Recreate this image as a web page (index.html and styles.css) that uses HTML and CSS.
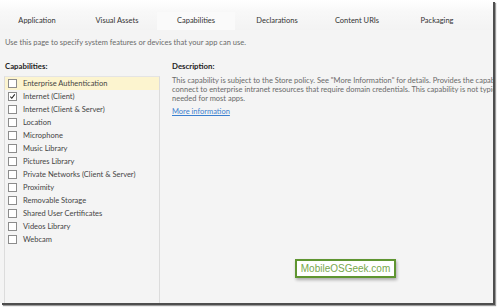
FILE: index.html
```html
<!DOCTYPE html>
<html>
<head>
<meta charset="utf-8">
<link rel="stylesheet" href="styles.css">
</head>
<body>
<div class="frame">
  <div class="tabs">
    <div class="tab">Application</div>
    <div class="tab">Visual Assets</div>
    <div class="tab selected">Capabilities</div>
    <div class="tab">Declarations</div>
    <div class="tab">Content URIs</div>
    <div class="tab">Packaging</div>
  </div>
  <div class="intro">Use this page to specify system features or devices that your app can use.</div>
  <div class="columns">
    <div class="left">
      <div class="heading">Capabilities:</div>
      <div class="list">
        <div class="item active"><span class="box"></span>Enterprise Authentication</div>
        <div class="item"><span class="box"><svg viewBox="0 0 8 8" width="8" height="8"><path d="M1.5 4.2 L3.2 6 L6.6 1.6" fill="none" stroke="#222" stroke-width="1.2"/></svg></span>Internet (Client)</div>
        <div class="item"><span class="box"></span>Internet (Client &amp; Server)</div>
        <div class="item"><span class="box"></span>Location</div>
        <div class="item"><span class="box"></span>Microphone</div>
        <div class="item"><span class="box"></span>Music Library</div>
        <div class="item"><span class="box"></span>Pictures Library</div>
        <div class="item"><span class="box"></span>Private Networks (Client &amp; Server)</div>
        <div class="item"><span class="box"></span>Proximity</div>
        <div class="item"><span class="box"></span>Removable Storage</div>
        <div class="item"><span class="box"></span>Shared User Certificates</div>
        <div class="item"><span class="box"></span>Videos Library</div>
        <div class="item"><span class="box"></span>Webcam</div>
      </div>
    </div>
    <div class="right">
      <div class="heading">Description:</div>
      <div class="desc">
        <div class="line">This capability is subject to the Store policy. See "More Information" for details. Provides the capability to</div>
        <div class="line">connect to enterprise intranet resources that require domain credentials. This capability is not typically</div>
        <div class="line">needed for most apps.</div>
        <a class="more" href="#">More information</a>
      </div>
    </div>
  </div>
  <div class="watermark">MobileOSGeek.com</div>
</div>
</body>
</html>
```

FILE: styles.css
```css
html, body {
  margin: 0;
  padding: 0;
  background: #ffffff;
}
body {
  width: 497px;
  height: 308px;
  overflow: hidden;
  font-family: "Lato", "Open Sans", sans-serif;
  font-size: 7.5px;
  color: #555;
}
.frame {
  position: relative;
  width: 493px;
  height: 303px;
  background: #f4f4f4;
  box-shadow: 2px 2px 0 #4e4e4e, 3px 3px 1px #9a9a9a;
  overflow: hidden;
}
.tabs {
  display: flex;
  height: 30px;
  padding-top: 12px;
  box-sizing: border-box;
  margin-left: -3px;
  background: linear-gradient(#ffffff, #f8f8f8 40%, #f3f3f3);
}
.tab {
  width: 80px;
  height: 18px;
  line-height: 17px;
  text-align: center;
  color: #333;
}
.tab.selected {
  background: #fafafa;
  width: 78px;
  margin-right: 2px;
}
.intro {
  padding: 7px 0 0 5px;
  height: 24px;
  line-height: 11px;
  color: #6a6a6a;
}
.columns {
  display: flex;
}
.left {
  width: 160px;
  flex: none;
}
.heading {
  font-weight: bold;
  font-size: 7.8px;
  color: #1e1e1e;
  padding-left: 5px;
  height: 15px;
  line-height: 11px;
}
.list {
  margin-left: 4px;
  border-left: 1px solid #dcdcdc;
  border-right: 1px solid #dcdcdc;
  border-top: 1px solid #e4e4e4;
  height: 240px;
}
.item {
  display: flex;
  align-items: center;
  height: 13px;
  color: #444;
  white-space: nowrap;
}
.item.active {
  background: #fcf4cf;
}
.box {
  width: 7px;
  height: 7px;
  border: 1px solid #8c8c8c;
  background: #fff;
  margin: 0 6px 0 3px;
  display: flex;
  align-items: center;
  justify-content: center;
  flex: none;
}
.box svg {
  width: 7px;
  height: 7px;
}
.right {
  flex: 1;
  min-width: 0;
  padding-left: 7px;
  overflow: hidden;
}
.right .heading {
  padding-left: 5px;
}
.desc {
  padding-left: 5px;
  line-height: 9px;
  color: #6a6a6a;
}
.line {
  white-space: nowrap;
}
.more {
  display: inline-block;
  margin-top: 4px;
  color: #3b7fcf;
  text-decoration: underline;
}
.watermark {
  position: absolute;
  left: 295px;
  top: 259px;
  width: 97px;
  height: 15px;
  border: 2px solid #5f9531;
  background: #fff;
  color: #78a74c;
  font-family: "Liberation Sans", Arial, sans-serif;
  font-size: 10px;
  line-height: 15px;
  text-align: center;
  box-shadow: 1px 2px 3px rgba(0,0,0,0.3);
}
```
